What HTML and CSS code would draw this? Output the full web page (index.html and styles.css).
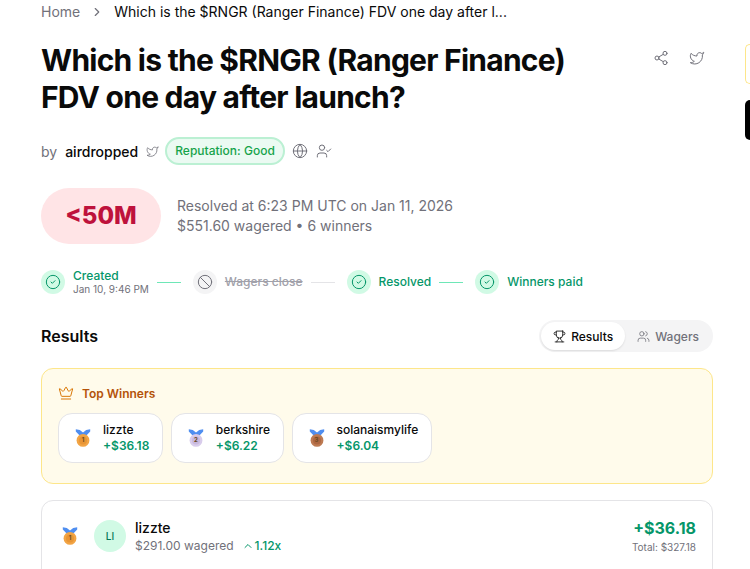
FILE: index.html
```html
<!DOCTYPE html>
<html lang="en">

<head>
    <meta charset="UTF-8">
    <title>Which is the $RNGR (Ranger Finance) FDV one day after launch?</title>
    <link rel="stylesheet" href="styles.css">
</head>

<body>
    <svg class="defs" width="0" height="0">
        <symbol id="check" viewBox="0 0 24 24"><circle cx="12" cy="12" r="10"/><path d="m9 12 2 2 4-4"/></symbol>
        <symbol id="twitter" viewBox="0 0 24 24"><path d="M22 4s-.7 2.1-2 3.4c1.6 10-9.4 17.3-18 11.6 2.2.1 4.4-.6 6-2C3 15.5.5 9.6 3 5c2.2 2.6 5.6 4.1 9 4-.9-4.2 4-6.6 7-3.8 1.1 0 3-1.2 3-1.2z"/></symbol>
        <symbol id="medal" viewBox="0 0 20 24">
            <path class="ribbon" d="M1 1l5 1 4 3 4-3 5-1 0 3-6 6h-6l-6-6z"/>
            <circle class="disc" cx="10" cy="15" r="8"/>
            <circle class="inner" cx="10" cy="15" r="5"/>
        </symbol>
    </svg>

    <div class="page">
        <main class="content">
            <nav class="crumbs">
                <span class="crumb-home">Home</span>
                <svg class="icon crumb-sep" viewBox="0 0 24 24"><path d="m9 18 6-6-6-6"/></svg>
                <span class="crumb-current">Which is the $RNGR (Ranger Finance) FDV one day after l...</span>
            </nav>

            <div class="title-row">
                <h1>Which is the $RNGR (Ranger Finance) FDV one day after launch?</h1>
                <div class="title-actions">
                    <svg class="icon action-icon" viewBox="0 0 24 24"><circle cx="18" cy="5" r="3"/><circle cx="6" cy="12" r="3"/><circle cx="18" cy="19" r="3"/><path d="m8.6 13.5 6.8 4M15.4 6.5l-6.8 4"/></svg>
                    <svg class="icon action-icon"><use href="#twitter"/></svg>
                </div>
            </div>

            <div class="byline">
                <span class="by">by</span>
                <span class="author">airdropped</span>
                <svg class="icon by-icon"><use href="#twitter"/></svg>
                <span class="reputation">Reputation: Good</span>
                <svg class="icon meta-icon" viewBox="0 0 24 24"><circle cx="12" cy="12" r="10"/><path d="M12 2a14.5 14.5 0 0 0 0 20 14.5 14.5 0 0 0 0-20M2 12h20"/></svg>
                <svg class="icon meta-icon" viewBox="0 0 24 24"><path d="M16 21v-2a4 4 0 0 0-4-4H6a4 4 0 0 0-4 4v2"/><circle cx="9" cy="7" r="4"/><path d="m16 11 2 2 4-4"/></svg>
            </div>

            <div class="outcome">
                <div class="outcome-pill">&lt;50M</div>
                <div class="outcome-text">
                    <div>Resolved at 6:23 PM UTC on Jan 11, 2026</div>
                    <div>$551.60 wagered • 6 winners</div>
                </div>
            </div>

            <div class="timeline">
                <div class="step">
                    <span class="step-dot"><svg class="icon"><use href="#check"/></svg></span>
                    <div class="step-two">
                        <div class="step-label">Created</div>
                        <div class="step-date">Jan 10, 9:46 PM</div>
                    </div>
                </div>
                <span class="step-line"></span>
                <div class="step">
                    <span class="step-dot dot-off"><svg class="icon" viewBox="0 0 24 24"><circle cx="12" cy="12" r="10"/><path d="m4.9 4.9 14.2 14.2"/></svg></span>
                    <div class="step-label label-off">Wagers close</div>
                </div>
                <span class="step-line line-off"></span>
                <div class="step">
                    <span class="step-dot"><svg class="icon"><use href="#check"/></svg></span>
                    <div class="step-label">Resolved</div>
                </div>
                <span class="step-line"></span>
                <div class="step">
                    <span class="step-dot"><svg class="icon"><use href="#check"/></svg></span>
                    <div class="step-label">Winners paid</div>
                </div>
            </div>

            <div class="results-head">
                <h2>Results</h2>
                <div class="tabs">
                    <div class="tab tab-on">
                        <svg class="icon" viewBox="0 0 24 24"><path d="M6 9H4.5a2.5 2.5 0 0 1 0-5H6M18 9h1.5a2.5 2.5 0 0 0 0-5H18M4 22h16M10 14.66V17c0 .55-.47.98-.97 1.21C7.85 18.75 7 20.24 7 22M14 14.66V17c0 .55.47.98.97 1.21C16.15 18.75 17 20.24 17 22"/><path d="M18 2H6v7a6 6 0 0 0 12 0V2Z"/></svg>
                        Results
                    </div>
                    <div class="tab">
                        <svg class="icon" viewBox="0 0 24 24"><path d="M16 21v-2a4 4 0 0 0-4-4H6a4 4 0 0 0-4 4v2"/><circle cx="9" cy="7" r="4"/><path d="M22 21v-2a4 4 0 0 0-3-3.87M16 3.13a4 4 0 0 1 0 7.75"/></svg>
                        Wagers
                    </div>
                </div>
            </div>

            <section class="winners">
                <div class="winners-title">
                    <svg class="icon" viewBox="0 0 24 24"><path d="M11.562 3.266a.5.5 0 0 1 .876 0L15.39 8.87a1 1 0 0 0 1.516.294L21.183 5.5a.5.5 0 0 1 .798.519l-2.834 10.246a1 1 0 0 1-.956.734H5.81a1 1 0 0 1-.957-.734L2.02 6.02a.5.5 0 0 1 .798-.519l4.276 3.664a1 1 0 0 0 1.516-.294z"/><path d="M5 21h14"/></svg>
                    Top Winners
                </div>
                <div class="winner-list">
                    <div class="winner">
                        <span class="medal gold"><svg><use href="#medal"/></svg><b>1</b></span>
                        <div>
                            <div class="winner-name">lizzte</div>
                            <div class="winner-gain">+$36.18</div>
                        </div>
                    </div>
                    <div class="winner">
                        <span class="medal silver"><svg><use href="#medal"/></svg><b>2</b></span>
                        <div>
                            <div class="winner-name">berkshire</div>
                            <div class="winner-gain">+$6.22</div>
                        </div>
                    </div>
                    <div class="winner">
                        <span class="medal bronze"><svg><use href="#medal"/></svg><b>3</b></span>
                        <div>
                            <div class="winner-name">solanaismylife</div>
                            <div class="winner-gain">+$6.04</div>
                        </div>
                    </div>
                </div>
            </section>

            <section class="result-row">
                <span class="medal gold"><svg><use href="#medal"/></svg><b>1</b></span>
                <span class="avatar">LI</span>
                <div class="result-user">
                    <div class="result-name">lizzte</div>
                    <div class="result-meta">
                        $291.00 wagered
                        <span class="multiplier">
                            <svg class="icon" viewBox="0 0 24 24"><path d="m18 15-6-6-6 6"/></svg>
                            1.12x
                        </span>
                    </div>
                </div>
                <div class="result-money">
                    <div class="result-gain">+$36.18</div>
                    <div class="result-total">Total: $327.18</div>
                </div>
            </section>
        </main>

        <aside class="side">
            <div class="side-card"></div>
            <div class="side-black"></div>
        </aside>
    </div>
</body>

</html>
```

FILE: styles.css
```css
html,
body {
    margin: 0;
    height: 569px;
    overflow: hidden;
    background: #fff;
}

body {
    font-family: Inter, "Liberation Sans", sans-serif;
    color: #0a0a0a;
}

.defs {
    position: absolute;
}

.icon {
    width: 16px;
    height: 16px;
    fill: none;
    stroke: currentColor;
    stroke-width: 2;
    stroke-linecap: round;
    stroke-linejoin: round;
    flex: none;
}

.page {
    display: flex;
    gap: 32px;
    padding-left: 41px;
}

.content {
    width: 672px;
    flex: none;
}

/* breadcrumb */
.crumbs {
    display: flex;
    align-items: center;
    height: 23px;
    font-size: 14px;
}

.crumb-home {
    color: #71717a;
}

.crumb-sep {
    width: 14px;
    height: 14px;
    margin: 0 10px;
    color: #71717a;
}

/* title */
.title-row {
    display: flex;
    justify-content: space-between;
    margin-top: 19px;
}

h1 {
    width: 560px;
    margin: 0;
    font-size: 30px;
    line-height: 37px;
    font-weight: 700;
    letter-spacing: -0.75px;
}

.title-actions {
    display: flex;
    gap: 20px;
    margin: 8px 8px 0 0;
    color: #71717a;
}

.action-icon {
    width: 16px;
    height: 16px;
    stroke-width: 1.5;
}

/* byline */
.byline {
    display: flex;
    align-items: center;
    margin-top: 21px;
    height: 28px;
    font-size: 14px;
}

.by {
    color: #71717a;
    margin-right: 8px;
}

.author {
    font-weight: 500;
}

.by-icon {
    width: 13px;
    height: 13px;
    margin: 0 6px 0 8px;
    color: #71717a;
    stroke-width: 1.5;
}

.reputation {
    padding: 0 8px;
    line-height: 24px;
    border: 2px solid #bbf0d3;
    border-radius: 14px;
    background: #ebfaf2;
    color: #16a34a;
    font-size: 12px;
    font-weight: 500;
}

.meta-icon {
    margin-left: 7px;
    color: #71717a;
    stroke-width: 1.5;
}

.meta-icon + .meta-icon {
    margin-left: 8px;
}

/* outcome */
.outcome {
    display: flex;
    align-items: center;
    gap: 16px;
    margin-top: 23px;
}

.outcome-pill {
    width: 120px;
    height: 56px;
    border-radius: 28px;
    background: #ffe4e6;
    color: #be123c;
    font-size: 24px;
    font-weight: 800;
    line-height: 56px;
    text-align: center;
}

.outcome-text {
    font-size: 14px;
    line-height: 20px;
    color: #71717a;
}

/* timeline */
.timeline {
    display: flex;
    align-items: center;
    gap: 8px;
    margin-top: 24px;
}

.step {
    display: flex;
    align-items: center;
    gap: 8px;
}

.step-dot {
    display: flex;
    align-items: center;
    justify-content: center;
    width: 24px;
    height: 24px;
    border-radius: 50%;
    background: #d1fae5;
    color: #059669;
}

.step-dot .icon {
    width: 16px;
    height: 16px;
    stroke-width: 1.5;
}

.dot-off {
    background: #f4f4f5;
    color: #71717a;
}

.step-two {
    padding-top: 1px;
}

.step-label {
    color: #059669;
    font-size: 12px;
    font-weight: 500;
    line-height: 14px;
}

.label-off {
    color: #a1a1aa;
    text-decoration: line-through;
}

.step-date {
    color: #71717a;
    font-size: 10px;
    line-height: 13px;
}

.step-line {
    width: 24px;
    height: 1px;
    margin-right: 4px;
    background: #6ee7b7;
}

.line-off {
    background: #e4e4e7;
}

/* results header */
.results-head {
    display: flex;
    align-items: center;
    justify-content: space-between;
    margin-top: 24px;
}

h2 {
    margin: 0;
    font-size: 16px;
    font-weight: 600;
}

.tabs {
    display: flex;
    padding: 2px;
    border-radius: 16px;
    background: #f4f4f5;
}

.tab {
    display: flex;
    align-items: center;
    gap: 5px;
    height: 28px;
    padding: 0 12px;
    border-radius: 14px;
    color: #71717a;
    font-size: 12px;
    font-weight: 500;
}

.tab .icon {
    width: 13px;
    height: 13px;
    stroke-width: 1.5;
}

.tab-on {
    background: #fff;
    color: #0a0a0a;
    box-shadow: 0 1px 2px rgba(0, 0, 0, 0.1);
}

/* top winners */
.winners {
    margin-top: 16px;
    height: 116px;
    box-sizing: border-box;
    padding: 16px;
    border: 1px solid #fde68a;
    border-radius: 12px;
    background: #fffbeb;
}

.winners-title {
    display: flex;
    align-items: center;
    gap: 8px;
    height: 16px;
    color: #b45309;
    font-size: 12px;
    font-weight: 600;
}

.winners-title .icon {
    color: #d97706;
    stroke-width: 1.5;
}

.winner-list {
    display: flex;
    gap: 8px;
    margin-top: 12px;
}

.winner {
    display: flex;
    align-items: center;
    gap: 12px;
    height: 50px;
    box-sizing: border-box;
    padding: 0 12.5px 0 16px;
    border: 1px solid #e4e4e7;
    border-radius: 14px;
    background: #fff;
}

.winner-name {
    font-size: 12px;
    font-weight: 500;
    line-height: 16px;
}

.winner-gain {
    color: #059669;
    font-size: 12px;
    font-weight: 600;
    line-height: 16px;
}

/* medals */
.medal {
    position: relative;
    display: block;
    width: 16px;
    height: 20px;
    flex: none;
}

.medal svg {
    display: block;
    width: 16px;
    height: 20px;
}

.medal b {
    position: absolute;
    left: 0;
    right: 0;
    top: 8px;
    color: #6b4a22;
    font-size: 6px;
    line-height: 8px;
    text-align: center;
}

.ribbon {
    fill: #4f8ef0;
}

.disc {
    fill: var(--medal-disc);
}

.inner {
    fill: var(--medal-inner);
}

.gold {
    --medal-disc: #f2a444;
    --medal-inner: #e89535;
}

.silver {
    --medal-disc: #d8cceb;
    --medal-inner: #c8b9de;
}

.bronze {
    --medal-disc: #bd7a52;
    --medal-inner: #ad6640;
}

/* result row */
.result-row {
    display: flex;
    align-items: center;
    margin-top: 16px;
    height: 88px;
    box-sizing: border-box;
    padding: 0 16px 16px 20px;
    border: 1px solid #e4e4e7;
    border-radius: 12px;
}

.avatar {
    width: 32px;
    height: 32px;
    margin-left: 16px;
    border-radius: 50%;
    background: #d1fae5;
    color: #047857;
    font-size: 10px;
    font-weight: 500;
    line-height: 32px;
    text-align: center;
}

.result-user {
    margin-left: 9px;
}

.result-name {
    padding-top: 2px;
    font-size: 14px;
    font-weight: 500;
    line-height: 18px;
}

.result-meta {
    display: flex;
    align-items: center;
    gap: 9px;
    color: #71717a;
    font-size: 12px;
    line-height: 18px;
}

.multiplier {
    display: flex;
    align-items: center;
    gap: 1px;
    margin-left: -1px;
    color: #059669;
    font-weight: 500;
}

.multiplier .icon {
    width: 12px;
    height: 12px;
}

.result-money {
    margin-left: auto;
    text-align: right;
}

.result-gain {
    color: #059669;
    font-size: 16px;
    font-weight: 700;
    line-height: 22px;
}

.result-total {
    color: #71717a;
    font-size: 10px;
    line-height: 16px;
}

/* edge of the sidebar */
.side {
    width: 5px;
    flex: none;
    padding-top: 44px;
}

.side-card {
    height: 40px;
    box-sizing: border-box;
    border: 1px solid #fde68a;
    border-right: 0;
    border-radius: 12px 0 0 12px;
}

.side-black {
    height: 40px;
    margin-top: 16px;
    border-radius: 12px 0 0 12px;
    background: #000;
}
```
